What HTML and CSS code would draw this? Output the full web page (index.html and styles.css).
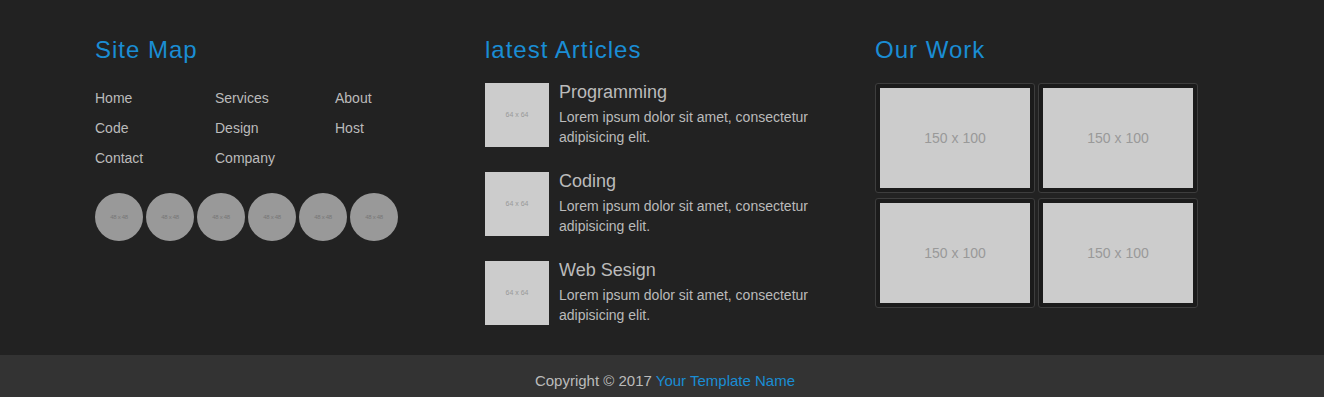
FILE: index.html
```html
<!DOCTYPE html>
<html>
<head>
<meta charset="utf-8">
<link rel="stylesheet" href="styles.css">
</head>
<body>
<section class="main">
  <div class="cols">
    <div class="col">
      <h3 class="title">Site Map</h3>
      <div class="links">
        <a>Home</a><a>Services</a><a>About</a>
        <a>Code</a><a>Design</a><a>Host</a>
        <a>Contact</a><a>Company</a>
      </div>
      <div class="circles">
        <span class="circle">48 x 48</span>
        <span class="circle">48 x 48</span>
        <span class="circle">48 x 48</span>
        <span class="circle">48 x 48</span>
        <span class="circle">48 x 48</span>
        <span class="circle">48 x 48</span>
      </div>
    </div>
    <div class="col">
      <h3 class="title">latest Articles</h3>
      <div class="media">
        <div class="media-img">64 x 64</div>
        <div class="media-body">
          <h4>Programming</h4>
          <p>Lorem ipsum dolor sit amet, consectetur adipisicing elit.</p>
        </div>
      </div>
      <div class="media">
        <div class="media-img">64 x 64</div>
        <div class="media-body">
          <h4>Coding</h4>
          <p>Lorem ipsum dolor sit amet, consectetur adipisicing elit.</p>
        </div>
      </div>
      <div class="media">
        <div class="media-img">64 x 64</div>
        <div class="media-body">
          <h4>Web Sesign</h4>
          <p>Lorem ipsum dolor sit amet, consectetur adipisicing elit.</p>
        </div>
      </div>
    </div>
    <div class="col">
      <h3 class="title">Our Work</h3>
      <div class="work">
        <div class="thumb"><div class="thumb-img">150 x 100</div></div>
        <div class="thumb"><div class="thumb-img">150 x 100</div></div>
        <div class="thumb"><div class="thumb-img">150 x 100</div></div>
        <div class="thumb"><div class="thumb-img">150 x 100</div></div>
      </div>
    </div>
  </div>
</section>
<footer class="footer">
  Copyright © 2017 <a>Your Template Name</a>
</footer>
</body>
</html>
```
FILE: styles.css
```css
* { box-sizing: border-box; }
html, body {
  margin: 0;
  padding: 0;
  background: #222222;
  font-family: "Liberation Sans", Arial, sans-serif;
  font-size: 14px;
  line-height: 20px;
  color: #bbbbbb;
}
.main {
  background: #222222;
  padding: 37px 0 30px 95px;
  height: 355px;
}
.cols {
  display: flex;
  gap: 30px;
}
.col {
  width: 360px;
}
.title {
  margin: 0 0 20px;
  font-size: 24px;
  font-weight: normal;
  line-height: 26px;
  letter-spacing: 1px;
  color: #1a8dd4;
}
.links {
  display: grid;
  grid-template-columns: 120px 120px 120px;
  line-height: 30px;
}
.links a {
  color: #bbbbbb;
}
.circles {
  display: flex;
  gap: 3px;
  margin-top: 20px;
}
.circle {
  width: 48px;
  height: 48px;
  border-radius: 50%;
  background: #999999;
  color: #777777;
  font-size: 6px;
  display: flex;
  align-items: center;
  justify-content: center;
  letter-spacing: -0.3px;
}
.media {
  display: flex;
  margin-bottom: 25px;
}
.media-img {
  width: 64px;
  height: 64px;
  flex: none;
  background: #cccccc;
  color: #999999;
  font-size: 7px;
  display: flex;
  align-items: center;
  justify-content: center;
  margin-right: 10px;
}
.media-body h4 {
  margin: -1px 0 5px;
  font-size: 18px;
  font-weight: normal;
  line-height: 20px;
  color: #bbbbbb;
}
.media-body p {
  margin: 0;
}
.work {
  display: grid;
  grid-template-columns: 160px 160px;
  column-gap: 3px;
  row-gap: 5px;
}
.thumb {
  border: 1px solid #3d3d3d;
  border-radius: 3px;
  background: #1b1b1b;
  padding: 4px;
}
.thumb-img {
  width: 150px;
  height: 100px;
  background: #cccccc;
  color: #999999;
  font-size: 14px;
  display: flex;
  align-items: center;
  justify-content: center;
}
.footer {
  background: #333333;
  text-align: center;
  padding: 16px 0 20px 6px;
  font-size: 15px;
  color: #bbbbbb;
}
.footer a {
  color: #1a8dd4;
}
```
